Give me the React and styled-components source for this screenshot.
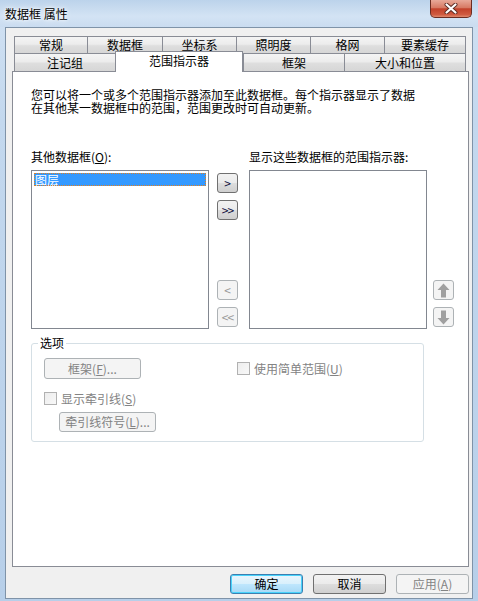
import styled, { createGlobalStyle } from 'styled-components';

const GlobalStyle = createGlobalStyle`
  html, body {
    margin: 0;
    padding: 0;
  }
  body {
    font-family: "Noto Sans CJK SC", "Liberation Sans", sans-serif;
    font-size: 12px;
    color: #000;
  }
`;

const Window = styled.div`
  width: 478px;
  height: 601px;
  box-sizing: border-box;
  display: flex;
  flex-direction: column;
  background: linear-gradient(180deg, #b9d1ea 0%, #cfe0f2 3%, #c3d8ee 20%, #b7cfe9 100%);
`;

const TitleBar = styled.div`
  height: 27px;
  display: flex;
  align-items: flex-start;
  padding-left: 5px;
  background: linear-gradient(180deg, #bcd3eb 0%, #d3e3f4 60%, #cadcf0 100%);
`;

const Title = styled.span`
  margin-top: 7px;
  line-height: 14px;
  font-size: 12px;
  text-shadow: 0 0 6px #fff, 0 0 3px #fff;
`;

const CloseButton = styled.div`
  margin-left: auto;
  margin-right: 6px;
  width: 42px;
  height: 18px;
  box-sizing: border-box;
  border: 1px solid #6b2d22;
  border-top: none;
  border-radius: 0 0 5px 5px;
  background: linear-gradient(180deg, #e8a999 0%, #d77a64 45%, #c2412a 52%, #cf5a40 85%, #e08a6e 100%);
  display: flex;
  align-items: center;
  justify-content: center;
`;

const Client = styled.div`
  flex: 1;
  margin: 0 5px 2px 5px;
  border: 1px solid #7f93a8;
  background: #f0f0f0;
  padding: 8px 3px 0 6px;
  display: flex;
  flex-direction: column;
`;

const TabRow = styled.div`
  display: flex;
  align-items: flex-end;
  margin-left: 2px;
  height: ${p => p.$height}px;
`;

const Tab = styled.div`
  width: ${p => p.$width}px;
  height: 100%;
  box-sizing: border-box;
  border: 1px solid #898c95;
  border-bottom: none;
  border-right: ${p => (p.$last ? '1px solid #898c95' : 'none')};
  background: linear-gradient(180deg, #f4f4f4 0%, #ececec 45%, #dedede 55%, #d6d6d6 100%);
  display: flex;
  align-items: center;
  justify-content: center;
  line-height: 14px;
`;

const ActiveTab = styled.div`
  position: relative;
  z-index: 2;
  width: ${p => p.$width}px;
  height: 21px;
  margin-bottom: -1px;
  box-sizing: border-box;
  border: 1px solid #898c95;
  border-bottom: none;
  background: #fff;
  display: flex;
  align-items: center;
  justify-content: center;
  padding-bottom: 2px;
  line-height: 14px;
`;

const Panel = styled.div`
  height: 496px;
  box-sizing: border-box;
  border: 1px solid #898c95;
  background: #fff;
  padding: 16px 0 0 18px;
  display: flex;
  flex-direction: column;
`;

const Description = styled.p`
  margin: 0;
  width: 390px;
  line-height: 13px;
`;

const LabelRow = styled.div`
  display: flex;
  margin-top: 36px;
  line-height: 13px;
`;

const FieldLabel = styled.span`
  width: ${p => p.$width || 'auto'};
`;

const ListRow = styled.div`
  display: flex;
  margin-top: 7px;
  height: 159px;
`;

const ListBox = styled.div`
  width: 178px;
  box-sizing: border-box;
  border: 1px solid #828790;
  background: #fff;
  padding: 2px;
`;

const ListItem = styled.div`
  height: 13px;
  line-height: 13px;
  padding-left: 1px;
  background: ${p => (p.$selected ? '#3399ff' : 'transparent')};
  color: ${p => (p.$selected ? '#fff' : '#000')};
  outline: ${p => (p.$selected ? '1px dotted #e2801f' : 'none')};
  outline-offset: -1px;
`;

const ButtonColumn = styled.div`
  display: flex;
  flex-direction: column;
  gap: 7px;
  padding: 3px 0 2px;
  margin: ${p => p.$margin};
`;

const Spacer = styled.div`
  flex: 1;
`;

const SmallButton = styled.button`
  width: 21px;
  height: 20px;
  padding: 0;
  box-sizing: border-box;
  border: 1px solid ${p => (p.disabled ? '#adb2b5' : '#707070')};
  border-radius: 3px;
  background: ${p =>
    p.disabled ? '#f4f4f4' : 'linear-gradient(180deg, #f2f2f2 0%, #ebebeb 48%, #dddddd 52%, #cfcfcf 100%)'};
  color: ${p => (p.disabled ? '#9a9a9a' : '#101040')};
  font-family: inherit;
  font-size: 12px;
  line-height: 14px;
  letter-spacing: ${p => (p.$wide ? '-1px' : '0')};
  display: flex;
  align-items: center;
  justify-content: center;
`;

const OptionsGroup = styled.fieldset`
  margin: 7px 0 0 0;
  width: 393px;
  box-sizing: border-box;
  border: 1px solid #d5dfe5;
  border-radius: 3px;
  padding: 8px 0 9px 12px;
  min-inline-size: 0;
`;

const GroupTitle = styled.legend`
  padding: 0 2px;
  margin-left: -6px;
  font-size: 12px;
  line-height: 14px;
`;

const GroupRow = styled.div`
  display: flex;
  align-items: center;
  margin-top: ${p => p.$top || 0}px;
  padding-left: ${p => p.$indent || 0}px;
`;

const GroupButton = styled.button`
  width: 97px;
  height: ${p => p.$height}px;
  padding: 0;
  box-sizing: border-box;
  border: 1px solid #adb2b5;
  border-radius: 3px;
  background: #f4f4f4;
  color: #838383;
  font-family: inherit;
  font-size: 12px;
  line-height: 14px;
`;

const CheckOption = styled.label`
  display: flex;
  align-items: center;
  gap: 4px;
  color: #838383;
  line-height: 13px;
  margin-left: ${p => p.$left || 0}px;
`;

const CheckBox = styled.span`
  width: 13px;
  height: 13px;
  box-sizing: border-box;
  border: 1px solid #b1b1b1;
  background: linear-gradient(135deg, #ededed 0%, #f8f8f8 100%);
`;

const Footer = styled.div`
  display: flex;
  justify-content: flex-end;
  gap: 10px;
  margin-top: 7px;
`;

const DialogButton = styled.button`
  width: 73px;
  height: 20px;
  padding: 0;
  box-sizing: border-box;
  border: 1px solid ${p => (p.$primary ? '#3c7fb1' : p.disabled ? '#adb2b5' : '#707070')};
  border-radius: 3px;
  background: ${p =>
    p.$primary
      ? 'linear-gradient(180deg, #eaf6fd 0%, #d9f0fc 48%, #bee6fd 52%, #a7d9f5 100%)'
      : p.disabled
        ? '#f4f4f4'
        : 'linear-gradient(180deg, #f2f2f2 0%, #ebebeb 48%, #dddddd 52%, #cfcfcf 100%)'};
  box-shadow: ${p => (p.$primary ? 'inset 0 0 0 1px #48d3fb' : 'none')};
  color: ${p => (p.disabled ? '#838383' : '#000')};
  font-family: inherit;
  font-size: 12px;
  line-height: 14px;
`;

const CloseIcon = () => (
  <svg width="14" height="11" viewBox="0 0 14 11">
    <path d="M2.5 1.5 L11.5 9.5 M11.5 1.5 L2.5 9.5" stroke="#5a2a22" strokeWidth="4" strokeLinecap="round" />
    <path d="M2.5 1.5 L11.5 9.5 M11.5 1.5 L2.5 9.5" stroke="#fff" strokeWidth="2.2" strokeLinecap="round" />
  </svg>
);

const ArrowIcon = ({ down }) => (
  <svg width="13" height="15" viewBox="0 0 13 15" style={down ? { transform: 'rotate(180deg)' } : undefined}>
    <path d="M6.5 0.5 L12.5 7 L9 7 L9 14.5 L4 14.5 L4 7 L0.5 7 Z" fill="#a0a0a0" />
  </svg>
);

const topTabs = [
  { label: '常规', width: 73 },
  { label: '数据框', width: 75 },
  { label: '坐标系', width: 74 },
  { label: '照明度', width: 74 },
  { label: '格网', width: 74 },
  { label: '要素缓存', width: 82 },
];

const App = () => {
  return (
    <>
      <GlobalStyle />
      <Window>
        <TitleBar>
          <Title>数据框 属性</Title>
          <CloseButton>
            <CloseIcon />
          </CloseButton>
        </TitleBar>
        <Client>
          <TabRow $height={17}>
            {topTabs.map((t, i) => (
              <Tab key={t.label} $width={t.width} $last={i === topTabs.length - 1}>
                {t.label}
              </Tab>
            ))}
          </TabRow>
          <TabRow $height={18}>
            <Tab $width={101}>注记组</Tab>
            <ActiveTab $width={128}>范围指示器</ActiveTab>
            <Tab $width={101}>框架</Tab>
            <Tab $width={122} $last>大小和位置</Tab>
          </TabRow>
          <Panel>
            <Description>
              您可以将一个或多个范围指示器添加至此数据框。每个指示器显示了数据在其他某一数据框中的范围，范围更改时可自动更新。
            </Description>
            <LabelRow>
              <FieldLabel $width="218px">
                其他数据框(<u>O</u>):
              </FieldLabel>
              <FieldLabel>显示这些数据框的范围指示器:</FieldLabel>
            </LabelRow>
            <ListRow>
              <ListBox>
                <ListItem $selected>图层</ListItem>
              </ListBox>
              <ButtonColumn $margin="0 11px 0 8px">
                <SmallButton>&gt;</SmallButton>
                <SmallButton $wide>&gt;&gt;</SmallButton>
                <Spacer />
                <SmallButton disabled>&lt;</SmallButton>
                <SmallButton disabled $wide>&lt;&lt;</SmallButton>
              </ButtonColumn>
              <ListBox />
              <ButtonColumn $margin="0 0 0 6px">
                <Spacer />
                <SmallButton disabled>
                  <ArrowIcon />
                </SmallButton>
                <SmallButton disabled>
                  <ArrowIcon down />
                </SmallButton>
              </ButtonColumn>
            </ListRow>
            <OptionsGroup>
              <GroupTitle>选项</GroupTitle>
              <GroupRow>
                <GroupButton disabled $height={21}>
                  框架(<u>F</u>)...
                </GroupButton>
                <CheckOption $left={96}>
                  <CheckBox />
                  <span>
                    使用简单范围(<u>U</u>)
                  </span>
                </CheckOption>
              </GroupRow>
              <GroupRow $top={13}>
                <CheckOption>
                  <CheckBox />
                  <span>
                    显示牵引线(<u>S</u>)
                  </span>
                </CheckOption>
              </GroupRow>
              <GroupRow $top={7} $indent={15}>
                <GroupButton disabled $height={20}>
                  牵引线符号(<u>L</u>)...
                </GroupButton>
              </GroupRow>
            </OptionsGroup>
          </Panel>
          <Footer>
            <DialogButton $primary>确定</DialogButton>
            <DialogButton>取消</DialogButton>
            <DialogButton disabled>
              应用(<u>A</u>)
            </DialogButton>
          </Footer>
        </Client>
      </Window>
    </>
  );
};

export default App;
